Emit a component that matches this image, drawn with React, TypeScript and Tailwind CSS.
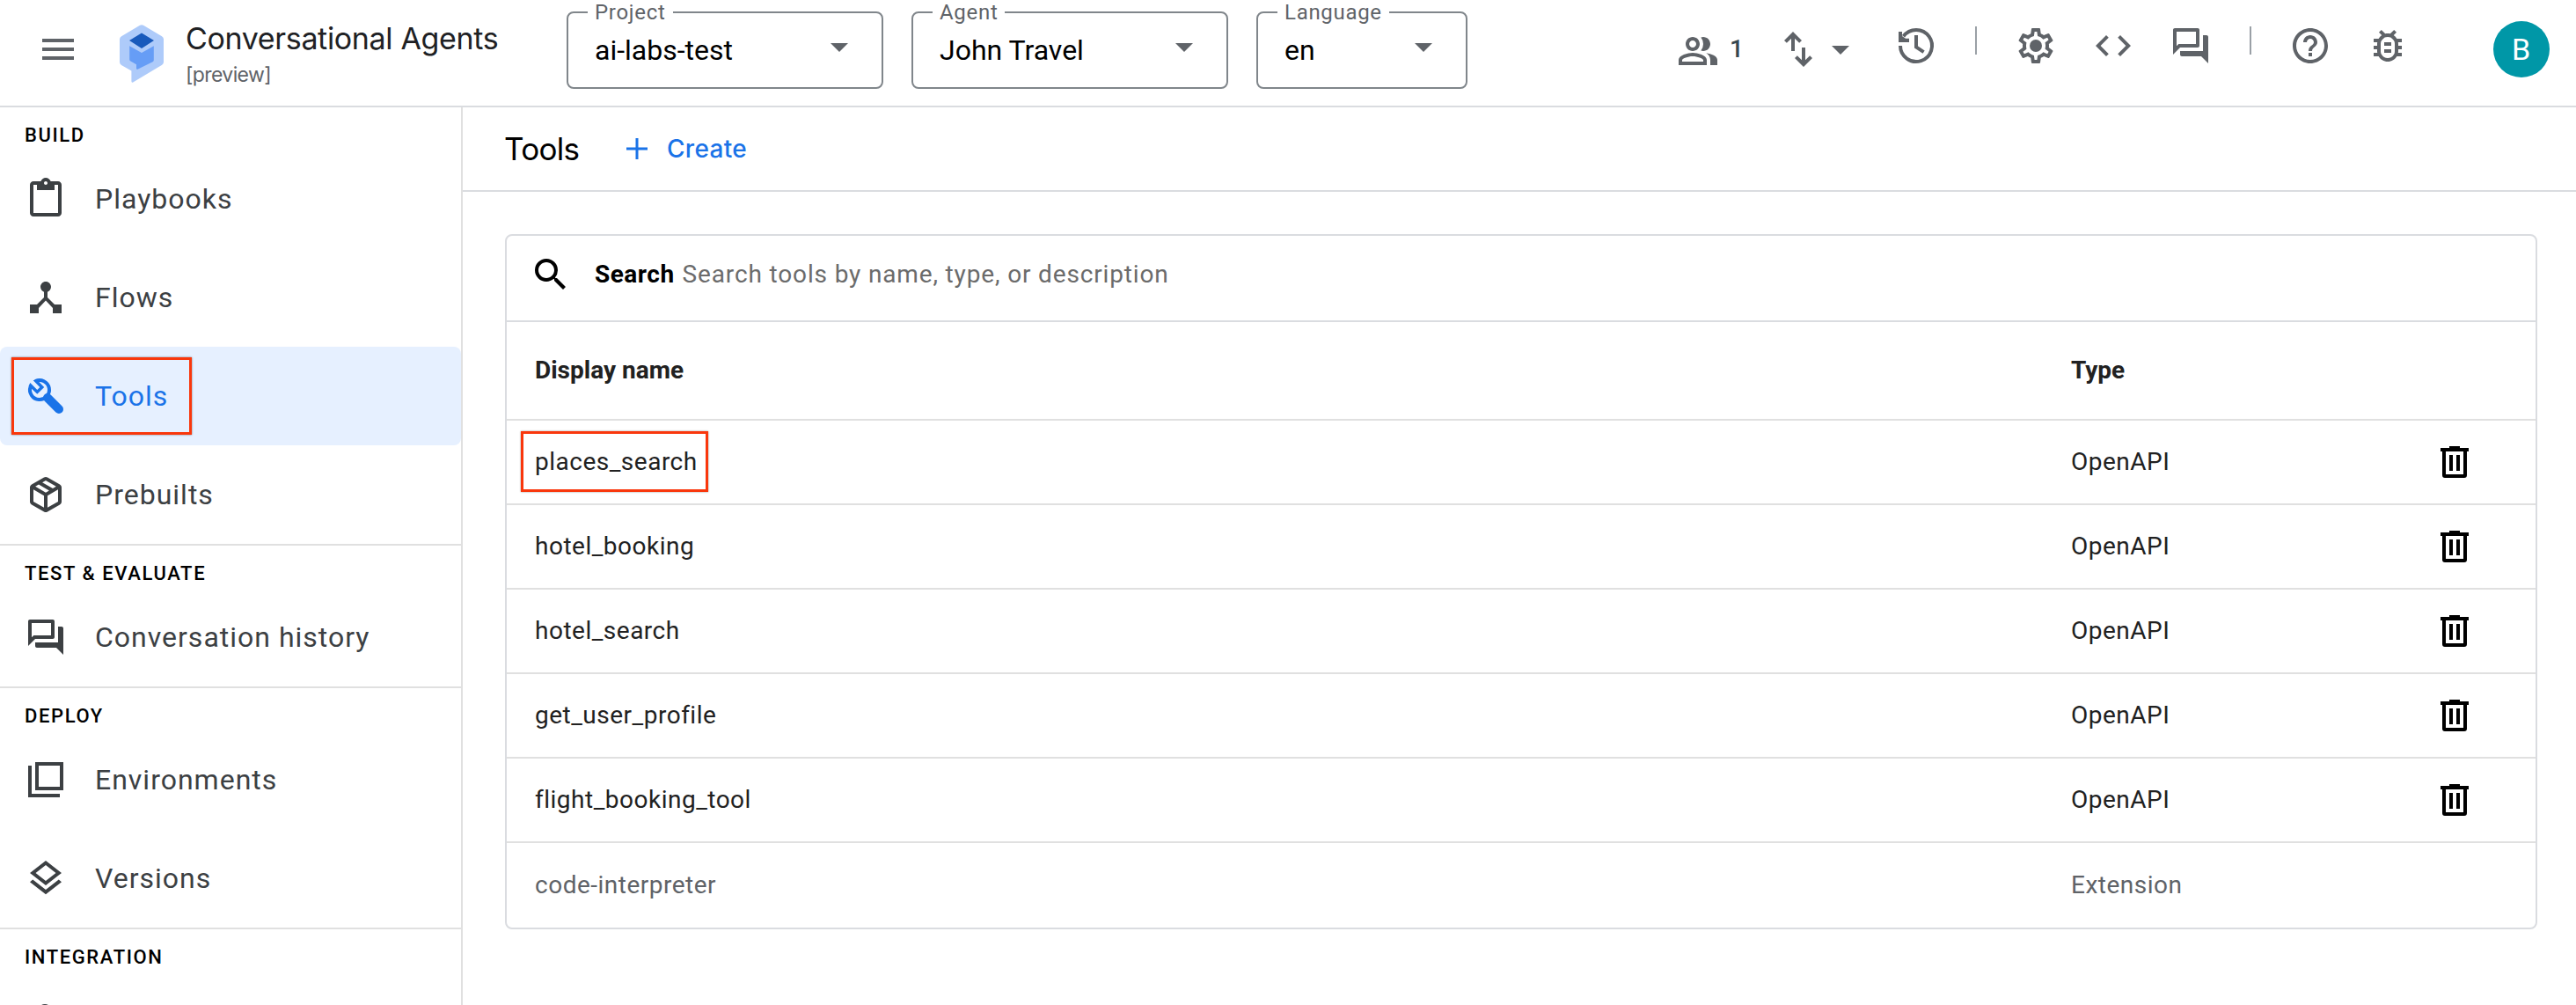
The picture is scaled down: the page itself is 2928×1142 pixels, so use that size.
import React from 'react';
import { MdMenu, MdOutlinePeopleAlt, MdCode, MdOutlineForum, MdHelpOutline, MdOutlineBugReport, MdDeviceHub, MdOutlineLayers, MdSearch, MdArrowDropDown, MdContentPaste } from 'react-icons/md';

const Symbol = ({ d, className = '' }: { d: string; className?: string }) => (
  <svg className={`size-12 shrink-0 ${className}`} viewBox="0 -960 960 960" fill="currentColor"><path d={d} /></svg>
);

const SWAP = 'M320-440v-287L217-624l-57-56 200-200 200 200-57 56-103-103v287h-80ZM600-80 400-280l57-56 103 103v-287h80v287l103-103 57 56L600-80Z';
const PACKAGE = 'M440-183v-274L200-596v274l240 139Zm80 0 240-139v-274L520-457v274Zm-80 92L160-252q-19-11-29.5-29T120-321v-318q0-22 10.5-40t29.5-29l280-161q19-11 40-11t40 11l280 161q19 11 29.5 29t10.5 40v318q0 22-10.5 40T800-252L520-91q-19 11-40 11t-40-11Zm200-528 77-44-237-137-78 45 238 136Zm-160 93 78-45-237-137-78 45 237 137Z';
const GEAR = 'M19.43 12.98c.04-.32.07-.64.07-.98s-.03-.66-.07-.98l2.11-1.65c.19-.15.24-.42.12-.64l-2-3.46c-.12-.22-.39-.3-.61-.22l-2.49 1c-.52-.4-1.08-.73-1.69-.98l-.38-2.65C14.46 2.18 14.25 2 14 2h-4c-.25 0-.46.18-.49.42l-.38 2.65c-.61.25-1.17.59-1.69.98l-2.49-1c-.23-.09-.49 0-.61.22l-2 3.46c-.13.22-.07.49.12.64l2.11 1.65c-.04.32-.07.65-.07.98s.03.66.07.98l-2.11 1.65c-.19.15-.24.42-.12.64l2 3.46c.12.22.39.3.61.22l2.49-1c.52.4 1.08.73 1.69.98l.38 2.65c.03.24.24.42.49.42h4c.25 0 .46-.18.49-.42l.38-2.65c.61-.25 1.17-.59 1.69-.98l2.49 1c.23.09.49 0 .61-.22l2-3.46c.12-.22.07-.49-.12-.64l-2.11-1.65zm-1.98-1.71c.04.31.05.52.05.73 0 .21-.02.43-.05.73l-.14 1.13.89.7 1.08.84-.7 1.21-1.27-.51-1.04-.42-.9.68c-.43.32-.84.56-1.25.73l-1.06.43-.16 1.13-.2 1.35h-1.4l-.19-1.35-.16-1.13-1.06-.43c-.43-.18-.83-.41-1.23-.71l-.91-.7-1.06.43-1.27.51-.7-1.21 1.08-.84.89-.7-.14-1.13c-.03-.31-.05-.54-.05-.74s.02-.43.05-.73l.14-1.13-.89-.7-1.08-.84.7-1.21 1.27.51 1.04.42.9-.68c.43-.32.84-.56 1.25-.73l1.06-.43.16-1.13.2-1.35h1.39l.19 1.35.16 1.13 1.06.43c.43.18.83.41 1.23.71l.91.7 1.06-.43 1.27-.51.7 1.21-1.07.85-.89.7.14 1.13z';

const Gear = () => (
  <svg className="ml-[43px] size-12 shrink-0" viewBox="0 0 24 24" fill="currentColor"><path d={GEAR} /><circle cx="12" cy="12" r="3.5" /></svg>
);

const History = () => (
  <svg className="ml-[38px] size-12 shrink-0" viewBox="-4 -4 48 48" fill="none" stroke="currentColor" strokeWidth="4">
    <path d="M2 20A18 18 0 1 0 5.5 9.3" />
    <path d="M20 8v13.5l8.6 5.6" />
    <path d="M0 4h4v5l4 2.8h4V16H0z" fill="currentColor" stroke="none" />
  </svg>
);

const Logo = () => (
  <svg className="ml-[46px] mt-7 h-[66px] w-[50px] shrink-0" viewBox="0 0 50 66">
    <path d="M23 .8Q25 -.3 27 .8L48 13.2Q50 14.4 50 16.6V42.5Q50 44.6 48.2 45.8L15.2 65.4Q13.4 66.2 13.4 64.2V52.4L2 45.9Q0 44.7 0 42.5V16.6Q0 14.4 2 13.2Z" fill="#aecbfa" />
    <path d="M11 18 25 9.6 39 18 25 27Z" fill="#185abc" />
    <path d="M11.2 24.3 25 32 38.8 24.3V40.2Q38.8 41.6 37.6 42.3L20.4 50.7Q19 51.2 19 49.8V45.2L12.4 41.6Q11.2 40.9 11.2 39.6Z" fill="#669df6" />
  </svg>
);

const Wrench = () => (
  <svg className="size-12 shrink-0" viewBox="0 0 48 48" fill="none">
    <path d="M12.2 7.1A11 11 0 1 1 6.6 13.4" stroke="currentColor" strokeWidth="4" />
    <path d="M6.3 9 14.3 17 17.3 14 9.7 6.3 13.5 5 22.2 14 14.3 21.7 4.6 12.5Z" fill="currentColor" />
    <path d="M26 26l13 13" stroke="currentColor" strokeWidth="10" strokeLinecap="round" />
  </svg>
);

const Squares = () => (
  <svg className="size-12 shrink-0" viewBox="0 0 48 48" fill="none" stroke="currentColor" strokeWidth="4">
    <path d="M14 6h28v28H14z" /><path d="M6 8v34h34" />
  </svg>
);

const Trash = () => (
  <svg className="h-9 w-8" viewBox="0 0 32 36" fill="currentColor">
    <path fillRule="evenodd" d="M10 0h12v2h10v4h-2v27q0 3-3 3H5q-3 0-3-3V6H0V2h10zM6 6v26h20V6zM10 10h4v18h-4zM18 10h4v18h-4z" />
  </svg>
);

const Field = ({ label, value, width }: { label: string; value: string; width: string }) => (
  <div className={`relative mt-[13px] mr-8 flex h-[88px] shrink-0 items-center justify-between rounded-lg border-2 border-[#80868b] pl-[30px] ${width}`}>
    <span className="absolute -top-[17px] left-[22px] bg-white px-2 text-2xl/8 tracking-[0.7px] text-[#5f6368]">{label}</span>
    <span className="text-[32px]/[40px] text-black">{value}</span>
    <MdArrowDropDown className="mt-[-8px] mr-6 size-12 text-[#5f6368]" />
  </div>
);

const Item = ({ icon, label, active }: { icon: React.ReactNode; label: string; active?: boolean }) => (
  <div className={`flex h-28 items-center gap-8 rounded-lg pl-7 text-[32px] tracking-[1px] ${active ? 'relative bg-[#e6f0ff] text-[#1a73e8]' : 'text-[#3c4043]'}`}>
    {icon}
    <span>{label}</span>
    {active && <span className="absolute top-3 left-[13px] h-[88px] w-[205px] border-[3px] border-[#f9370c] shadow-[0_0_2px_rgba(0,0,0,0.5)]" />}
  </div>
);

const Section = ({ title, children, last }: { title: string; children: React.ReactNode; last?: boolean }) => (
  <section className={last ? '' : 'border-b-2 border-[#e0e0e0]'}>
    <h2 className="h-12 pt-4 pl-7 text-[22px]/8 font-medium tracking-[1.6px] text-black">{title}</h2>
    {children}
  </section>
);

const rows = [
  ['places_search', 'OpenAPI'],
  ['hotel_booking', 'OpenAPI'],
  ['hotel_search', 'OpenAPI'],
  ['get_user_profile', 'OpenAPI'],
  ['flight_booking_tool', 'OpenAPI'],
  ['code-interpreter', 'Extension'],
];

export default function App() {
  return (
    <div className="flex h-[1142px] w-[2928px] flex-col overflow-hidden bg-white font-['Roboto',sans-serif]">
      <header className="flex h-[122px] shrink-0 items-start border-b-2 border-[#dadce0] text-[#5f6368]">
        <MdMenu className="mt-8 ml-[42px] size-12 shrink-0" />
        <Logo />
        <div className="ml-[25px] w-[433px] shrink-0 pt-[22px] font-['Inter',sans-serif]">
          <div className="text-[34px]/[44px] tracking-[-0.35px] text-[#202124]">Conversational Agents</div>
          <div className="mt-[2px] text-[23px]/[34px] tracking-[-0.6px]">[preview]</div>
        </div>
        <Field label="Project" value="ai-labs-test" width="w-[360px]" />
        <Field label="Agent" value="John Travel" width="w-[360px]" />
        <Field label="Language" value="en" width="w-[240px]" />
        <div className="mt-7 ml-auto flex h-12 shrink-0 items-center">
          <MdOutlinePeopleAlt className="mt-3 size-12 shrink-0" />
          <span className="mt-2 ml-3 w-[54px] text-[28px] font-medium text-[#37474f]">1</span>
          <Symbol d={SWAP} className="mt-2" />
          <MdArrowDropDown className="mt-2 size-12 shrink-0" />
          <History />
          <span className="mb-3 ml-[43px] h-8 w-[2px] bg-[#9aa0a6]" />
          <Gear />
          <MdCode className="ml-10 size-12 shrink-0" />
          <MdOutlineForum className="ml-10 size-12 shrink-0" />
          <span className="mb-3 ml-[43px] h-8 w-[2px] bg-[#9aa0a6]" />
          <MdHelpOutline className="ml-[43px] size-12 shrink-0" />
          <MdOutlineBugReport className="ml-10 size-12 shrink-0" />
          <span className="mt-2 mr-[30px] ml-24 flex size-16 items-center justify-center rounded-full bg-[#0097a7] pr-px text-[34px] text-white">B</span>
        </div>
      </header>
      <div className="flex min-h-0 flex-1">
        <nav className="w-[526px] shrink-0 overflow-hidden border-r-2 border-[#e0e0e0]">
          <Section title="BUILD">
            <Item icon={<MdContentPaste className="size-12" />} label="Playbooks" />
            <Item icon={<MdDeviceHub className="size-12" />} label="Flows" />
            <Item icon={<Wrench />} label="Tools" active />
            <Item icon={<Symbol d={PACKAGE} />} label="Prebuilts" />
          </Section>
          <Section title="TEST &amp; EVALUATE">
            <Item icon={<MdOutlineForum className="size-12" />} label="Conversation history" />
          </Section>
          <Section title="DEPLOY">
            <Item icon={<Squares />} label="Environments" />
            <Item icon={<MdOutlineLayers className="size-12" />} label="Versions" />
          </Section>
          <Section title="INTEGRATION" last>
            <div className="mt-[37px] ml-[43px] size-4 rounded-full border-4 border-[#3c4043]" />
          </Section>
        </nav>
        <main className="min-w-0 flex-1">
          <div className="flex h-24 items-center border-b-2 border-[#dadce0] pl-[47px] font-['Inter',sans-serif]">
            <h1 className="w-[139px] text-[35px] tracking-[-0.7px] text-black">Tools</h1>
            <svg className="size-6 text-[#1a73e8]" viewBox="0 0 24 24" stroke="currentColor" strokeWidth="3"><path d="M12 0v24M0 12h24" /></svg>
            <span className="ml-[22px] text-[28px] font-medium tracking-[0.3px] text-[#1a73e8]">Create</span>
          </div>
          <div className="mt-12 mr-11 ml-12 rounded-lg border-2 border-[#dadce0] text-[28px]">
            <div className="flex h-[98px] items-center border-b-2 border-[#dadce0] pb-2 pl-[26px]">
              <MdSearch className="size-12 text-black" />
              <span className="ml-[26px] font-bold tracking-[0.5px] text-black">Search</span>
              <span className="ml-[9px] tracking-[0.85px] text-[#6b6b6b]">Search tools by name, type, or description</span>
            </div>
            <div className="flex h-28 items-center border-b-2 border-[#e0e0e0] pl-8 font-bold text-[#212121]">
              <span className="w-[1746px]">Display name</span>
              <span>Type</span>
            </div>
            {rows.map(([name, type], i) => (
              <div key={name} className={`flex h-24 items-center pl-8 tracking-[0.5px] ${i < 5 ? 'border-b-2 border-[#e0e0e0] text-[#212121]' : 'text-[#5f6368]'}`}>
                <span className="w-[1746px]">
                  <span className="relative">
                    {name}
                    {i === 0 && <span className="absolute -top-[18px] -left-4 h-[69px] w-[213px] border-[3px] border-[#f9370c] shadow-[0_0_2px_rgba(0,0,0,0.4)]" />}
                  </span>
                </span>
                <span className="w-[420px]">{type}</span>
                {i < 5 && <span className="text-black"><Trash /></span>}
              </div>
            ))}
          </div>
        </main>
      </div>
    </div>
  );
}
